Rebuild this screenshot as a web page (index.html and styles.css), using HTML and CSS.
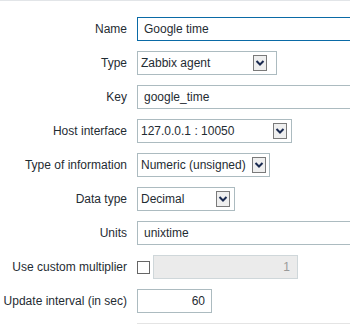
FILE: index.html
```html
<!DOCTYPE html>
<html lang="en">
<head>
    <meta charset="UTF-8">
    <title>Item</title>
    <link rel="stylesheet" href="styles.css">
</head>
<body>
    <div class="topline"></div>
    <form class="item-form">
        <label>Name</label>
        <div class="field"><input class="text wide focused" type="text" value="Google time"></div>

        <label>Type</label>
        <div class="field">
            <div class="select select-type"><span>Zabbix agent</span><span class="drop"><svg width="12" height="8" viewBox="0 0 12 8"><polyline points="2.5,2 6,5.5 9.5,2" /></svg></span></div>
        </div>

        <label>Key</label>
        <div class="field"><input class="text wide" type="text" value="google_time"></div>

        <label>Host interface</label>
        <div class="field">
            <div class="select select-host"><span>127.0.0.1 : 10050</span><span class="drop"><svg width="12" height="8" viewBox="0 0 12 8"><polyline points="2.5,2 6,5.5 9.5,2" /></svg></span></div>
        </div>

        <label>Type of information</label>
        <div class="field">
            <div class="select select-info"><span>Numeric (unsigned)</span><span class="drop"><svg width="12" height="8" viewBox="0 0 12 8"><polyline points="2.5,2 6,5.5 9.5,2" /></svg></span></div>
        </div>

        <label>Data type</label>
        <div class="field">
            <div class="select select-data"><span>Decimal</span><span class="drop"><svg width="12" height="8" viewBox="0 0 12 8"><polyline points="2.5,2 6,5.5 9.5,2" /></svg></span></div>
        </div>

        <label>Units</label>
        <div class="field"><input class="text wide" type="text" value="unixtime"></div>

        <label>Use custom multiplier</label>
        <div class="field multiplier">
            <span class="checkbox"></span>
            <input class="text number disabled" type="text" value="1" disabled>
        </div>

        <label>Update interval (in sec)</label>
        <div class="field"><input class="text short number" type="text" value="60"></div>

        <span></span>
        <div class="next-row"></div>
    </form>
</body>
</html>
```

FILE: styles.css
```css
body {
    margin: 0;
    padding: 0;
    font-family: Arial, "Liberation Sans", sans-serif;
    font-size: 12px;
    color: #1f2c33;
    background-color: #fff;
    overflow: hidden;
}

.topline {
    height: 1px;
    background-color: #e2e5e8;
}

.item-form {
    display: grid;
    grid-template-columns: 127px 1fr;
    grid-template-rows: repeat(9, 24px) 1px;
    column-gap: 10px;
    row-gap: 10px;
    padding-top: 16px;
    width: 350px;
    overflow: hidden;
}

.item-form label {
    align-self: center;
    text-align: right;
    white-space: nowrap;
}

.field {
    display: flex;
    align-items: center;
}

.text {
    box-sizing: border-box;
    height: 24px;
    margin: 0;
    padding: 0 6px;
    border: 1px solid #acbbc0;
    background-color: #fff;
    font-family: Arial, "Liberation Sans", sans-serif;
    font-size: 12px;
    color: #1f2c33;
    outline: none;
}

.wide {
    width: 240px;
}

.focused {
    border-color: #0a6aa6;
}

.short {
    width: 75px;
}

.number {
    text-align: right;
}

.select {
    box-sizing: border-box;
    display: flex;
    align-items: center;
    height: 24px;
    padding-left: 3px;
    border: 1px solid #acbbc0;
    white-space: nowrap;
}

.select span:first-child {
    flex-grow: 1;
}

.drop {
    box-sizing: border-box;
    display: flex;
    align-items: center;
    justify-content: center;
    width: 14px;
    height: 16px;
    border: 1px solid #7a7a7a;
    background-color: #efefef;
}

.drop polyline {
    fill: none;
    stroke: #1a2a50;
    stroke-width: 2;
}

.select-type {
    width: 140px;
    padding-right: 9px;
}

.select-host {
    width: 155px;
    padding-right: 4px;
}

.select-info {
    width: 133px;
    padding-right: 3px;
}

.select-data {
    width: 98px;
    padding-right: 4px;
}

.multiplier {
    gap: 3px;
}

.checkbox {
    box-sizing: border-box;
    width: 13px;
    height: 13px;
    border: 1px solid #666;
    background-color: #fff;
}

.disabled {
    width: 145px;
    padding-right: 7px;
    background-color: #ebebeb;
    border-color: #cfd7da;
    color: #9a9a9a;
}

.next-row {
    width: 240px;
    height: 1px;
    background-color: #e4e4e4;
}
```
